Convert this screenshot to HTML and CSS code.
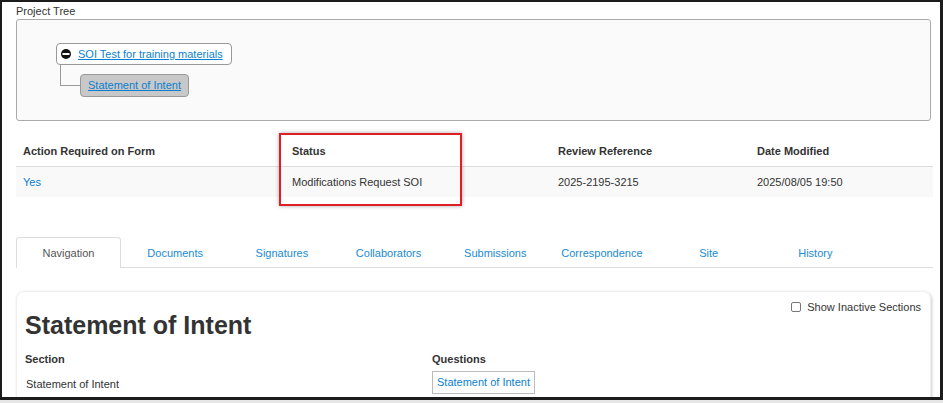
FILE: index.html
```html
<!DOCTYPE html>
<html lang="en">
<head>
    <meta charset="UTF-8">
    <meta name="viewport" content="width=device-width, initial-scale=1.0">
    <title>Statement of Intent</title>
    <link rel="stylesheet" href="styles.css">
</head>
<body>

    <div class="frame">

        <div class="tree-label">Project Tree</div>
        <div class="project-tree">
            <div class="tree-node root-node">
                <svg class="collapse-icon" width="10" height="10" viewBox="0 0 10 10">
                    <circle cx="5" cy="5" r="5" fill="#111"/>
                    <rect x="1.5" y="4" width="7" height="2" fill="#fff"/>
                </svg>
                <a href="#">SOI Test for training materials</a>
            </div>
            <div class="tree-children">
                <div class="tree-child">
                    <span class="tree-elbow"></span>
                    <div class="tree-node current-node">
                        <a href="#">Statement of Intent</a>
                    </div>
                </div>
            </div>
        </div>

        <table class="form-info">
            <thead>
                <tr>
                    <th class="col-action">Action Required on Form</th>
                    <th class="col-status">Status</th>
                    <th class="col-ref">Review Reference</th>
                    <th>Date Modified</th>
                </tr>
            </thead>
            <tbody>
                <tr>
                    <td><a href="#">Yes</a></td>
                    <td>Modifications Request SOI</td>
                    <td>2025-2195-3215</td>
                    <td>2025/08/05 19:50</td>
                </tr>
            </tbody>
        </table>

        <div class="highlight-box"></div>

        <ul class="tabs">
            <li class="tab active">Navigation</li>
            <li class="tab"><a href="#">Documents</a></li>
            <li class="tab"><a href="#">Signatures</a></li>
            <li class="tab"><a href="#">Collaborators</a></li>
            <li class="tab"><a href="#">Submissions</a></li>
            <li class="tab"><a href="#">Correspondence</a></li>
            <li class="tab"><a href="#">Site</a></li>
            <li class="tab"><a href="#">History</a></li>
        </ul>

        <div class="panel">
            <div class="panel-header">
                <h1>Statement of Intent</h1>
                <label class="inactive-toggle">
                    <input type="checkbox">
                    Show Inactive Sections
                </label>
            </div>
            <table class="sections">
                <thead>
                    <tr>
                        <th class="col-section">Section</th>
                        <th>Questions</th>
                    </tr>
                </thead>
                <tbody>
                    <tr>
                        <td>Statement of Intent</td>
                        <td><a href="#" class="question-link">Statement of Intent</a></td>
                    </tr>
                </tbody>
            </table>
        </div>

    </div>

</body>
</html>
```

FILE: styles.css
```css
html {
    background-color: #e6e6e6;
}

body {
    margin: 0;
    font-family: "Liberation Sans", Arial, sans-serif;
    font-size: 11px;
    color: #333;
}

a {
    color: #0a7fcf;
}

.frame {
    position: relative;
    width: 943px;
    height: 400px;
    box-sizing: border-box;
    padding: 3px 9px 0 14px;
    border-style: solid;
    border-color: #1c1c1c;
    border-width: 2px 3px 3px 2px;
    background-color: #fff;
    overflow: hidden;
}

.tree-label {
    line-height: 13px;
    margin-bottom: 1px;
}

.project-tree {
    padding: 23px 0 0 39px;
    box-sizing: border-box;
    height: 102px;
    border: 1px solid #aaa;
    border-radius: 3px;
    background-color: #fafafa;
}

.tree-node {
    display: inline-flex;
    align-items: center;
    height: 22px;
    box-sizing: border-box;
    border: 1px solid #999;
    border-radius: 4px;
    line-height: 13px;
}

.root-node {
    padding: 0 8px 0 4px;
    background-color: #fff;
}

.collapse-icon {
    margin-right: 7px;
}

.tree-children {
    margin-left: 4px;
}

.tree-child {
    display: flex;
    align-items: flex-start;
}

.tree-elbow {
    width: 19px;
    height: 20px;
    border-left: 1px solid #999;
    border-bottom: 1px solid #999;
    flex: none;
}

.current-node {
    margin-top: 9px;
    height: 23px;
    padding: 0 7px 0 7px;
    background-color: #c8c8c8;
}

.form-info {
    width: 917px;
    margin-top: 16px;
    border-collapse: collapse;
}

.form-info th,
.form-info td {
    padding: 0 7px;
    text-align: left;
    line-height: 13px;
}

.form-info th {
    height: 29px;
    font-weight: bold;
    border-bottom: 1px solid #ddd;
}

.form-info td {
    height: 29px;
    padding-top: 1px;
    background-color: #f9f9f9;
}

.form-info td a {
    text-decoration: none;
}

.col-action {
    width: 255px;
}

.col-status {
    width: 252px;
}

.col-ref {
    width: 185px;
}

.highlight-box {
    position: absolute;
    left: 277px;
    top: 131px;
    width: 183px;
    height: 73px;
    box-sizing: border-box;
    border: 2px solid #de1f26;
    box-shadow: 0 0 4px rgba(0, 0, 0, 0.35);
}

.tabs {
    display: flex;
    gap: 1.7px;
    width: 917px;
    margin: 40px 0 0 0;
    padding: 0;
    list-style: none;
    border-bottom: 1px solid #ddd;
}

.tab {
    width: 105px;
    height: 30px;
    box-sizing: border-box;
    line-height: 30px;
    text-align: center;
    border: 1px solid transparent;
    border-bottom: none;
}

.tab a {
    text-decoration: none;
    color: #1a8ad2;
}

.tab.active {
    color: #555;
    background-color: #fff;
    border-color: #ddd;
    border-radius: 3px 3px 0 0;
    margin-bottom: -1px;
    height: 31px;
}

.panel {
    width: 915px;
    height: 140px;
    margin-top: 23px;
    padding: 8px 9px 0 8px;
    box-sizing: border-box;
    border: 1px solid #eee;
    border-radius: 8px;
    box-shadow: 1px 1px 3px rgba(0, 0, 0, 0.2);
}

.panel-header {
    display: flex;
    justify-content: space-between;
    align-items: flex-start;
}

.panel-header h1 {
    margin: 10px 0 7px 0;
    font-size: 25px;
    line-height: 30px;
    font-weight: bold;
    color: #333;
}

.inactive-toggle {
    display: flex;
    align-items: center;
    line-height: 14px;
}

.inactive-toggle input {
    appearance: none;
    width: 10px;
    height: 10px;
    margin: 0 6px 0 0;
    border: 1px solid #777;
    border-radius: 2px;
    background-color: #fff;
}

.sections {
    width: 100%;
    border-collapse: collapse;
}

.sections th,
.sections td {
    padding: 0;
    text-align: left;
    line-height: 13px;
}

.sections th {
    height: 24px;
    font-weight: bold;
}

.sections td {
    vertical-align: top;
}

.sections td:first-child {
    padding-top: 7px;
    padding-left: 1px;
}

.col-section {
    width: 407px;
}

.question-link {
    display: inline-block;
    padding: 4px 4px;
    border: 1px solid #bbb;
    text-decoration: none;
    color: #0a7fcf;
}
```
